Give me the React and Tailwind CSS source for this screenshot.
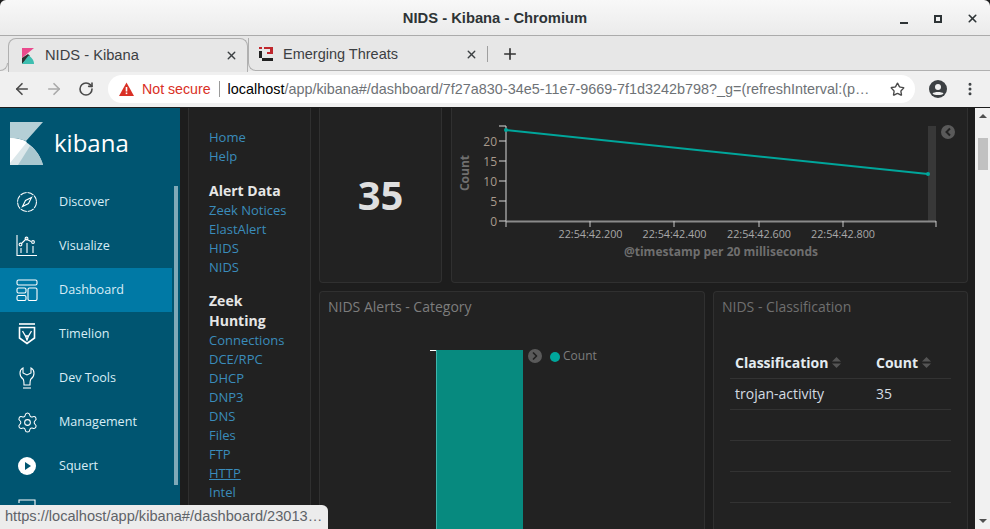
import React from 'react';
import { ArrowLeft, ArrowRight, RotateCw, Star, X, Plus, Settings, EllipsisVertical, ChevronRight } from 'lucide-react';

const KibanaLogo = () => (
  <svg width="33" height="43" viewBox="0 0 33 43">
    <path d="M0 0H33L16 19C11 17 6 16 0 16Z" fill="#b5cfd6" />
    <path d="M0 16C15 16 28 26 33 43H0Z" fill="#dbe7ea" />
    <path d="M8 43L20 24C26 28 31 35 33 43Z" fill="#a9c7cf" />
    <path d="M0 16C6 16 12 17 17 20L0 41Z" fill="#ffffff" />
  </svg>
);

const Favicon = () => (
  <svg width="12" height="16" viewBox="0 0 12 16">
    <path d="M0 0H12L0 10Z" fill="#ea4a8d" />
    <path d="M0 10L6 6L8 8L0 16Z" fill="#2f2f2f" />
    <path d="M0 16L6.5 7.5C9.5 9.5 12 12 12 16Z" fill="#3ebeb0" />
  </svg>
);

const EtFavicon = () => (
  <svg width="14" height="14" viewBox="0 0 14 14">
    <rect x="0" y="0" width="3" height="2" fill="#c0272d" />
    <rect x="0" y="4" width="3" height="7" fill="#222" />
    <path d="M5 0H14V7H8V5H11V2H5Z" fill="#c0272d" />
    <path d="M3 14V11H14V14Z" fill="#222" />
  </svg>
);

const WarningIcon = () => (
  <svg width="15" height="14" viewBox="0 0 15 14">
    <path d="M7.5 0.5L15 14H0Z" fill="#d93025" />
    <rect x="6.7" y="5" width="1.6" height="4.5" fill="#ffffff" />
    <rect x="6.7" y="10.5" width="1.6" height="1.6" fill="#ffffff" />
  </svg>
);

const navStroke = { fill: 'none', stroke: '#ffffff', strokeWidth: 1.1 };

const DiscoverIcon = () => (
  <svg width="22" height="22" viewBox="0 0 22 22" {...navStroke}>
    <circle cx="11" cy="11" r="9.5" strokeDasharray="6.6 0.9" />
    <path d="M15.5 6.5L12.5 12.5L6.5 15.5L9.5 9.5Z" />
  </svg>
);

const VisualizeIcon = () => (
  <svg width="22" height="22" viewBox="0 0 22 22" {...navStroke}>
    <path d="M1 0V20.5H21" />
    <path d="M5 9L10 4L15 6.5" />
    <circle cx="4.5" cy="9.5" r="1.4" />
    <circle cx="10.5" cy="3.5" r="1.4" />
    <circle cx="17" cy="7" r="1.4" />
    <path d="M5 13V18M11 8V18M17 11V18" />
  </svg>
);

const DashboardIcon = () => (
  <svg width="22" height="22" viewBox="0 0 22 22" {...navStroke}>
    <rect x="1" y="1" width="20" height="5" rx="1.5" />
    <rect x="1" y="9" width="9" height="5" rx="1.5" />
    <rect x="1" y="16.5" width="9" height="5" rx="1.5" />
    <rect x="12" y="9" width="9" height="12.5" rx="1.5" />
  </svg>
);

const TimelionIcon = () => (
  <svg width="22" height="22" viewBox="0 0 22 22" {...navStroke}>
    <path d="M3 1H19" strokeWidth="1.6" />
    <path d="M3.5 4.5H18.5V15L11 20.5L3.5 15Z" strokeWidth="1.6" />
    <path d="M6.5 8L9.5 13H12.5L15.5 8M9.5 13L11 17L12.5 13" strokeWidth="1.3" />
  </svg>
);

const DevToolsIcon = () => (
  <svg width="22" height="22" viewBox="0 0 22 22" {...navStroke}>
    <path d="M7 1C3 3 3 9 7 12C8 13 8 15 8 18H14C14 15 14 13 15 12C19 9 19 3 15 1V6L11 8L7 6Z" />
    <path d="M7 21H15" />
  </svg>
);

const SquertIcon = () => (
  <svg width="18" height="18" viewBox="0 0 18 18">
    <circle cx="9" cy="9" r="9" fill="#ffffff" />
    <path d="M7 5L13 9L7 13Z" fill="#005571" />
  </svg>
);

const LogoutIcon = () => (
  <svg width="22" height="22" viewBox="0 0 22 22" {...navStroke}>
    <path d="M3 4V1H19V21H3V18" />
    <path d="M1 11H13M5 7L1 11L5 15" />
  </svg>
);

const SortIcon = () => (
  <svg width="9" height="11" viewBox="0 0 9 11" className="ml-1">
    <path d="M4.5 0L9 4.5H0Z" fill="#555555" />
    <path d="M4.5 11L9 6.5H0Z" fill="#555555" />
  </svg>
);

const navItems = [
  { label: 'Discover', icon: <DiscoverIcon /> },
  { label: 'Visualize', icon: <VisualizeIcon /> },
  { label: 'Dashboard', icon: <DashboardIcon />, active: true },
  { label: 'Timelion', icon: <TimelionIcon /> },
  { label: 'Dev Tools', icon: <DevToolsIcon /> },
  { label: 'Management', icon: <Settings size={23} strokeWidth={1.1} /> },
  { label: 'Squert', icon: <SquertIcon /> },
  { label: 'Logout', icon: <LogoutIcon /> },
];

const linkGroups = [
  { links: ['Home', 'Help'] },
  { title: ['Alert Data'], links: ['Zeek Notices', 'ElastAlert', 'HIDS', 'NIDS'] },
  { title: ['Zeek', 'Hunting'], links: ['Connections', 'DCE/RPC', 'DHCP', 'DNP3', 'DNS', 'Files', 'FTP', 'HTTP', 'Intel'] },
];

const Sidebar = () => (
  <aside className="flex w-[180px] shrink-0 bg-[#005571] text-white">
    <div className="w-[172px] shrink-0">
      <div className="flex h-[72px] items-start pl-[10px] pt-[14px]">
        <KibanaLogo />
        <span className="ml-[11px] mt-[3px] text-[24px] font-medium leading-[36px] text-white">kibana</span>
      </div>
      {navItems.map((item) => (
        <div key={item.label} className={`flex h-11 items-center ${item.active ? 'bg-[#0079a5]' : ''}`}>
          <span className="flex w-[59px] justify-center pr-[5px]">{item.icon}</span>
          <span className="text-[12.6px] text-[#d8edf6]">{item.label}</span>
        </div>
      ))}
    </div>
    <div className="ml-[2px] mt-[78px] h-[299px] w-1 bg-[#7fa9b8]"></div>
  </aside>
);

const LinksPanel = () => (
  <div className="h-full w-[123px] shrink-0 border-x border-[#2f2f2f] bg-[#212121] pl-5 pt-[20px] text-[13px] leading-[19px]">
    {linkGroups.map((group, i) => (
      <div key={i} className={i === 0 ? 'mb-[15px]' : 'mb-[14px]'}>
        {group.title && (
          <div className="text-[14px] font-bold leading-5 text-[#e6e6e6]">
            {group.title.map((t) => <div key={t}>{t}</div>)}
          </div>
        )}
        {group.links.map((link) => (
          <div key={link} className={`text-[#3a8cbb] ${link === 'HTTP' ? 'underline' : ''}`}>{link}</div>
        ))}
      </div>
    ))}
  </div>
);

const LineChart = () => (
  <svg className="block" width="515" height="174" viewBox="452 108 515 174" fontFamily="'Open Sans', sans-serif">
    <rect x="928" y="126" width="8" height="95" fill="#383838" />
    <path d="M506 126H499M506 126V221" stroke="#d8d8d8" fill="none" />
    <path d="M499 141H506M499 161H506M499 181H506M499 201H506M499 221H506" stroke="#d8d8d8" />
    <path d="M506 221.5H936" stroke="#8a8a8a" strokeWidth="2" />
    <path d="M506 221V227M590 221V227M674 221V227M759 221V227M843 221V227M936 221V227" stroke="#c8c8c8" />
    {[['20', 146], ['15', 166], ['10', 186], ['5', 206], ['0', 226]].map(([t, y]) => (
      <text key={t} x="497" y={y} textAnchor="end" fontSize="12" fill="#a99a8c">{t}</text>
    ))}
    {[['22:54:42.200', 590.5], ['22:54:42.400', 674.5], ['22:54:42.600', 759], ['22:54:42.800', 843]].map(([t, x]) => (
      <text key={t} x={x} y="238" textAnchor="middle" fontSize="10.8" fill="#a8a8a8">{t}</text>
    ))}
    <text x="721" y="256" textAnchor="middle" fontSize="12" fontWeight="700" fill="#6f6f6f">@timestamp per 20 milliseconds</text>
    <text transform="translate(469 173) rotate(-90)" textAnchor="middle" fontSize="12" fontWeight="700" fill="#6f6f6f">Count</text>
    <path d="M506 130L928 174" stroke="#00a69b" strokeWidth="2" />
    <circle cx="506" cy="130" r="2" fill="#00a69b" />
    <circle cx="928" cy="174" r="2" fill="#00a69b" />
    <circle cx="948" cy="132" r="7" fill="#5a5a5a" />
    <path d="M950 128.5L946.5 132L950 135.5" stroke="#222222" strokeWidth="2" fill="none" />
  </svg>
);

const Panel = ({ className, children }) => (
  <div className={`rounded border border-[#303030] bg-[#222222] ${className}`}>{children}</div>
);

const Dashboard = () => (
  <main className="flex min-w-0 flex-1 gap-2 overflow-hidden bg-[#1d1d1d] pl-2 pr-[7px]">
    <LinksPanel />
    <div className="flex min-w-0 flex-1 flex-col gap-2">
      <div className="flex h-[175px] shrink-0 gap-[9px]">
        <Panel className="flex w-[123px] shrink-0 items-center justify-center rounded-t-none border-t-0">
          <span className="text-[40px] font-bold text-[#dfdfdf]">35</span>
        </Panel>
        <Panel className="min-w-0 flex-1 overflow-hidden rounded-t-none border-t-0">
          <LineChart />
        </Panel>
      </div>
      <div className="flex min-h-0 flex-1 gap-2">
        <Panel className="w-[386px] shrink-0 overflow-hidden rounded-b-none border-b-0">
          <div className="pl-2 pt-[5px] text-[14px] leading-5 text-[#7d7d7d]">NIDS Alerts - Category</div>
          <div className="mt-[33px] flex items-start pl-[110px]">
            <div className="h-px w-[6px] bg-white"></div>
            <div className="h-[200px] w-[87px] border-l border-[#3fb5ac] bg-[#078a7f]"></div>
            <div className="ml-[5px] mt-[-1px] flex h-[14px] w-[14px] items-center justify-center rounded-full bg-[#5a5a5a]">
              <ChevronRight size={12} strokeWidth={3.5} color="#222222" />
            </div>
            <div className="ml-[8px] flex items-center">
              <span className="h-[10px] w-[10px] rounded-full bg-[#00a69b]"></span>
              <span className="ml-[3px] -translate-y-px text-[12px] leading-[13px] text-[#7d7d7d]">Count</span>
            </div>
          </div>
        </Panel>
        <Panel className="min-w-0 flex-1 overflow-hidden rounded-b-none border-b-0">
          <div className="pl-2 pt-[5px] text-[14px] leading-5 text-[#6f6f6f]">NIDS - Classification</div>
          <div className="ml-4 mr-4 mt-[32px] text-[14px] text-[#d4dce2]">
            <div className="flex h-[30px] items-center border-b border-[#333333] pb-[2px] font-bold text-[#e4ebf0]">
              <span className="flex w-[146px] items-center pl-[5px]">Classification<SortIcon /></span>
              <span className="flex items-center">Count<SortIcon /></span>
            </div>
            <div className="flex h-[31px] items-center border-b border-[#333333] pb-[2px]">
              <span className="w-[146px] pl-[5px]">trojan-activity</span>
              <span>35</span>
            </div>
            <div className="h-[31px] border-b border-[#333333]"></div>
            <div className="h-[31px] border-b border-[#333333]"></div>
            <div className="h-[31px] border-b border-[#333333]"></div>
          </div>
        </Panel>
      </div>
    </div>
  </main>
);

const PageScrollbar = () => (
  <div className="flex w-[15px] shrink-0 flex-col items-center justify-between bg-[#f1f1f1] py-[6px]">
    <div className="flex w-full flex-col items-center">
      <div className="h-0 w-0 border-x-[4px] border-b-[4px] border-x-transparent border-b-[#505050]"></div>
      <div className="mt-[20px] h-[32px] w-[10px] bg-[#c1c1c1]"></div>
    </div>
    <div className="h-0 w-0 border-x-[4px] border-t-[4px] border-x-transparent border-t-[#505050]"></div>
  </div>
);

const BrowserChrome = () => (
  <header className="shrink-0 font-['Liberation_Sans',sans-serif] text-[#3c4043]">
    <div className="relative flex h-[36px] items-center justify-center rounded-t-md border-b border-[#ababab] bg-linear-to-b from-[#f8f8f8] to-[#ebebeb]">
      <span className="translate-y-px text-[14.75px] font-bold text-[#2e3436]">NIDS - Kibana - Chromium</span>
      <div className="absolute right-[11px] top-[12px] flex items-center text-[#2e3436]">
        <div className="mt-[8px] h-[2px] w-[8px] bg-[#2e3436]"></div>
        <div className="ml-[26px] h-[8px] w-[8px] border-2 border-[#2e3436]"></div>
        <X size={13} strokeWidth={3} className="ml-[24px]" />
      </div>
    </div>
    <div className="flex h-[35px] items-end bg-[#e7e7e7]">
      <div className="h-[8px] w-2 rounded-br-lg border-b border-r border-[#b0b0b0]"></div>
      <div className="flex h-[34px] w-[240px] translate-y-px items-center rounded-t-lg border border-b-0 border-[#b0b0b0] bg-[#e7e7e7] pl-[13px] pr-[9px]">
        <Favicon />
        <span className="ml-[11px] flex-1 text-[14.7px]">NIDS - Kibana</span>
        <X size={13} strokeWidth={2.5} />
      </div>
      <div className="flex h-[33px] w-[240px] items-center rounded-bl-lg border-b border-l border-[#b0b0b0] pl-[10px]">
        <EtFavicon />
        <span className="ml-[10px] flex-1 translate-y-px text-[14.5px]">Emerging Threats</span>
        <X size={13} strokeWidth={2.5} className="mr-[9px]" />
        <span className="h-[16px] w-px bg-[#9f9f9f]"></span>
      </div>
      <div className="flex h-[33px] flex-1 items-center border-b border-[#b0b0b0] pl-[13px]">
        <Plus size={18} strokeWidth={2.2} className="text-[#333333]" />
      </div>
    </div>
    <div className="flex h-[37px] items-center border-b border-[#1d1d1d] bg-[#f0f0f0]">
      <div className="flex w-[108px] items-center pl-[13px]">
        <ArrowLeft size={18} strokeWidth={2.2} className="text-[#4a4a4a]" />
        <ArrowRight size={18} strokeWidth={2.2} className="ml-[14px] text-[#a9a9a9]" />
        <RotateCw size={16} strokeWidth={2.4} className="ml-[15px] text-[#4a4a4a]" />
      </div>
      <div className="flex h-[28px] w-[807px] items-center rounded-full bg-white pl-[11px] pr-[10px]">
        <WarningIcon />
        <span className="ml-2 translate-y-px text-[14.2px] text-[#d93025]">Not secure</span>
        <span className="ml-2 mr-[8px] h-[16px] w-px bg-[#9a9a9a]"></span>
        <span className="min-w-0 flex-1 translate-y-px truncate text-[14.4px] text-[#6e7276]"><span className="text-black">localhost</span>/app/kibana#/dashboard/7f27a830-34e5-11e7-9669-7f1d3242b798?_g=(refreshInterval:(p…</span>
        <Star size={15} strokeWidth={2.2} className="ml-3 text-[#4a4a4a]" />
      </div>
      <div className="flex flex-1 items-center justify-end pr-[12px] text-[#3c4043]">
        <svg width="18" height="18" viewBox="0 0 18 18" className="mr-[15px]">
          <circle cx="9" cy="9" r="9" fill="#3c4043" />
          <circle cx="9" cy="7" r="3" fill="#f0f0f0" />
          <path d="M3.5 13.5C5 11.5 13 11.5 14.5 13.5C13 15.5 5 15.5 3.5 13.5Z" fill="#f0f0f0" />
        </svg>
        <EllipsisVertical size={16} strokeWidth={2.5} />
      </div>
    </div>
  </header>
);

export default function App() {
  return (
    <div className="relative flex h-[529px] w-[990px] flex-col overflow-hidden bg-[#1d1d1d] font-['Open_Sans',sans-serif]">
      <BrowserChrome />
      <div className="flex min-h-0 flex-1">
        <Sidebar />
        <Dashboard />
        <PageScrollbar />
      </div>
      {/* status bubble */}
      <div className="absolute bottom-0 left-0 flex h-[24px] w-[328px] items-center rounded-tr-md bg-[#ececec] pl-[5px] font-['Liberation_Sans',sans-serif] text-[14.6px] text-[#5f6368]">
        https://localhost/app/kibana#/dashboard/23013…
      </div>
    </div>
  );
}
